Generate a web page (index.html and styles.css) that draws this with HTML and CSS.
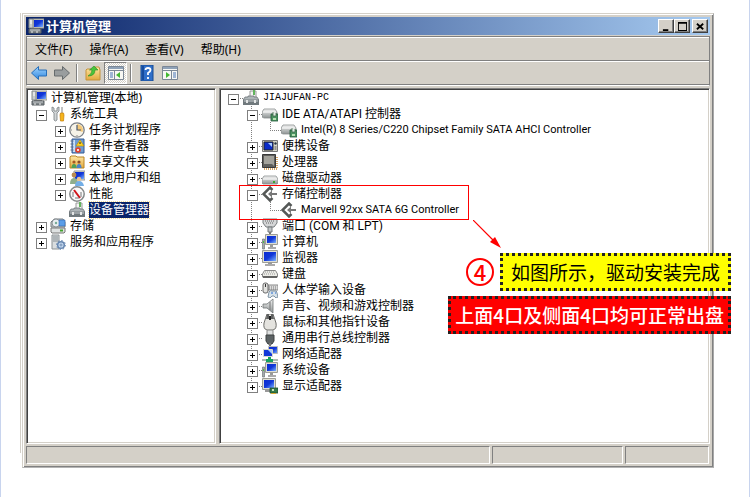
FILE: index.html
```html
<!DOCTYPE html>
<html lang="zh-CN">
<head>
<meta charset="utf-8">
<title>计算机管理</title>
<link rel="stylesheet" href="styles.css">
</head>
<body>
<svg class="sprite" aria-hidden="true">
  <defs>
    <linearGradient id="screen" x1="0" y1="0" x2="1" y2="1"><stop offset="0" stop-color="#0a2bd0"/><stop offset=".5" stop-color="#1238d8"/><stop offset="1" stop-color="#7db4ff"/></linearGradient>
    <linearGradient id="metal" x1="0" y1="0" x2="0" y2="1"><stop offset="0" stop-color="#f4f4f4"/><stop offset="1" stop-color="#8e9494"/></linearGradient>
    <linearGradient id="folder" x1="0" y1="0" x2="0" y2="1"><stop offset="0" stop-color="#ffe9a8"/><stop offset="1" stop-color="#e3a93c"/></linearGradient>
    <linearGradient id="blue" x1="0" y1="0" x2="0" y2="1"><stop offset="0" stop-color="#9fd4ff"/><stop offset="1" stop-color="#2f86de"/></linearGradient>
  </defs>
  <symbol id="i-manage" viewBox="0 0 16 16"><path d="M5 1h11v9H5z" fill="#d9d9cf" stroke="#9a9a92"/><path d="M6 2h9v7H6z" fill="url(#screen)"/><path d="M1 1h4v9H1z" fill="#c7cccc" stroke="#858b8b"/><path d="M2 3h2M2 5h2" stroke="#fff"/><path d="M3 10h8v2H3z" fill="#777"/><path d="M1 11h12v4H1z" fill="#7f8588" stroke="#5a6064"/><path d="M2 12h10" stroke="#c9cdcf"/><path d="M4 13v2M9 13v2" stroke="#eee"/></symbol>
  <symbol id="i-tools" viewBox="0 0 16 16"><path d="M2 1v4l2 2v7q1.500 2 3 0V7l2-2V1L7 2v3H4V2z" fill="#d2d6d8" stroke="#777e82" stroke-width=".8"/><path d="M12 1v7" stroke="#aaa" stroke-width="1.500"/><path d="M10.500 7h3l.5 2-.5 6h-3l-.5-6z" fill="#f6b51c" stroke="#c47c06" stroke-width=".7"/></symbol>
  <symbol id="i-clock" viewBox="0 0 16 16"><circle cx="8" cy="8" r="7.200" fill="#f6f3e8" stroke="#7c8086" stroke-width="1.300"/><path d="M8 8V2a6 6 0 0 1 5.500 8z" fill="#f3c87a"/><path d="M8 3v5h4" fill="none" stroke="#4a5a75" stroke-width="1.200"/><path d="M2 8h1M8 13v1" stroke="#888"/></symbol>
  <symbol id="i-event" viewBox="0 0 16 16"><path d="M3 1h12v14H3z" fill="#6f9cd2" stroke="#355b92"/><path d="M4 2h2v12H4z" fill="#c9def5"/><path d="M1.500 3h3M1.500 6h3M1.500 9h3M1.500 12h3" stroke="#5c6f8a"/><path d="M11 2l4 6H7z" fill="#ffd21e" stroke="#b58800" stroke-width=".6"/><path d="M11 4v2" stroke="#222"/><circle cx="9" cy="12" r="2.800" fill="#e2402a"/><path d="M8 11l2 2M10 11l-2 2" stroke="#fff" stroke-width=".8"/></symbol>
  <symbol id="i-share" viewBox="0 0 16 16"><path d="M1 3l1-1h5l1 1h7v11H1z" fill="url(#folder)" stroke="#b98524"/><circle cx="5" cy="8" r="1.600" fill="#a65a23"/><path d="M2.500 14q0-4 2.500-4t2.500 4z" fill="#4fa057"/><circle cx="10" cy="8" r="1.600" fill="#8b4e27"/><path d="M7.500 14q0-4 2.500-4t2.500 4z" fill="#4a83c9"/></symbol>
  <symbol id="i-users" viewBox="0 0 16 16"><path d="M5 1h11v9H5z" fill="#dedfd6" stroke="#999"/><path d="M6 2h9v7H6z" fill="url(#screen)"/><circle cx="5" cy="5" r="2.400" fill="#b98b50"/><path d="M1 14q0-6 4-6t4 6z" fill="#8fae8c"/><circle cx="10" cy="9" r="2.200" fill="#e6c191"/><path d="M6 16q0-5 4-5t5 5z" fill="#73aee6"/></symbol>
  <symbol id="i-perf" viewBox="0 0 16 16"><circle cx="8" cy="8" r="7.200" fill="#f9f9f9" stroke="#858989" stroke-width="1.500"/><path d="M4 11V6M12 11V6" stroke="#777"/><path d="M5 4l6 8" stroke="#d0161b" stroke-width="2"/><path d="M6 12h4" stroke="#777"/></symbol>
  <symbol id="i-device" viewBox="0 0 16 16"><path d="M7 1h6v8H7z" fill="#f3f3f3" stroke="#999"/><path d="M10 0h2v5h-2z" fill="#62b55d"/><path d="M2 7h3V6h6v1h3l2 3H0z" fill="#aeb5b8" stroke="#666c70" stroke-width=".7"/><path d="M0 10h16v5H0z" fill="#70797d"/><path d="M1 11h14" stroke="#c6cccf"/><path d="M3 10h2v3H3zM11 10h2v3h-2z" fill="#e4e6e6"/></symbol>
  <symbol id="i-storage" viewBox="0 0 16 16"><path d="M1 4l3-3h9l2 3v5H1z" fill="#cbd0d2" stroke="#777d80"/><circle cx="6" cy="5" r="4" fill="#e8edf0" stroke="#8b9296"/><circle cx="6" cy="5" r="1.200" fill="#7a9"/><path d="M9 2h6v6H9z" fill="#5a9de8" stroke="#2f66ab" stroke-width=".6"/><path d="M1 10h14v4l-1 1H2l-1-1z" fill="#dfe2e2" stroke="#777"/><path d="M10 12.500h3" stroke="#43a32e" stroke-width="2"/></symbol>
  <symbol id="i-services" viewBox="0 0 16 16"><path d="M2 1h7v14H2z" fill="#d9dddf" stroke="#8b9194"/><path d="M3 3h5M3 5h5M3 7h5" stroke="#858d92"/><circle cx="11" cy="11" r="3.300" fill="#c7dcf2" stroke="#6686b0" stroke-width="1.500"/><circle cx="11" cy="11" r="4.500" fill="none" stroke="#6686b0" stroke-dasharray="1.500 2"/><circle cx="11" cy="11" r="1" fill="#fff" stroke="#6686b0"/></symbol>
  <symbol id="i-ide" viewBox="0 0 16 16"><path d="M0 6l2-3h11l2 3v5l-2 1H2l-2-1z" fill="url(#metal)" stroke="#898e8e" stroke-width=".8"/><path d="M1 6h13" stroke="#fff"/><path d="M9 8h7v7H9z" fill="#4b9360" stroke="#24583a" stroke-width=".8"/><path d="M11 6v4h3V7" stroke="#45684f" fill="#dfeee2" stroke-width=".8"/><path d="M11 12h3v2h-3z" fill="#b7e0b2"/></symbol>
  <symbol id="i-portable" viewBox="0 0 16 16"><path d="M.5 2.500h15v11H.5z" fill="#d6d6ca" stroke="#777"/><path d="M2 4h9v8H2z" fill="#0b2cc8" stroke="#222"/><path d="M6 5h4v4z" fill="#a9cdff"/><circle cx="13.500" cy="5.500" r="1.200" fill="#234"/><path d="M12.500 9h2M12.500 11h2" stroke="#555"/></symbol>
  <symbol id="i-cpu" viewBox="0 0 16 16"><path d="M2 15h13V3" fill="none" stroke="#c9872f" stroke-width="1.500" stroke-dasharray="1 1"/><path d="M.5.5h13v13H.5z" fill="#5f5f5c" stroke="#393939"/><path d="M2 2h10v10l-2-2H2z" fill="#a3a29b"/></symbol>
  <symbol id="i-disk" viewBox="0 0 16 16"><path d="M0 9l2-3h12l2 3v4l-1 1H1l-1-1z" fill="url(#metal)" stroke="#8a8f8f" stroke-width=".8"/><path d="M1 9h14" stroke="#fff"/><path d="M11 12h2" stroke="#3da52f" stroke-width="2"/></symbol>
  <symbol id="i-ctrl" viewBox="0 0 16 16"><path d="M10.500 4L8 1.500 1.500 8 8 14.500l2.500-2.500" fill="none" stroke="#555857" stroke-width="2.500"/><path d="M6 8l4-3.500V7h5v2h-5v2.500z" fill="#777"/></symbol>
  <symbol id="i-port" viewBox="0 0 16 16"><path d="M1 1h14v4l-3 4H4L1 5z" fill="#d4d6d7" stroke="#777c7e"/><path d="M3 3h10M4 5h8" stroke="#666" stroke-dasharray="1 1"/><path d="M6 9h4v5H6z" fill="#c1c5c7" stroke="#72787a"/><path d="M7 14h2v2H7z" fill="#777"/></symbol>
  <symbol id="i-pc" viewBox="0 0 16 16"><path d="M3.500.5h12v10h-12z" fill="#deded4" stroke="#9e9e96"/><path d="M5 2h9v7H5z" fill="url(#screen)"/><path d="M8 11h3v2H8z" fill="#999"/><path d="M6 14h8" stroke="#aaa" stroke-width="2"/><path d="M.5 5h2v10h-2z" fill="#a4aaac" stroke="#72787a" stroke-width=".7"/><path d="M1 7h1v2H1z" fill="#50bc45"/></symbol>
  <symbol id="i-monitor" viewBox="0 0 16 16"><path d="M.5.500h15v12H.5z" fill="#deded4" stroke="#9e9e96"/><path d="M2 2h12v9H2z" fill="url(#screen)"/><path d="M6 12h4v2H6z" fill="#999"/><path d="M3 15h10" stroke="#aaa" stroke-width="2"/></symbol>
  <symbol id="i-keyboard" viewBox="0 0 16 16"><path d="M2.500 4.500h11L15.500 8v3H.5V8z" fill="#ecece7" stroke="#888"/><path d="M3 6h10M2 8h12" stroke="#999" stroke-dasharray="1 1"/><path d="M1 11h14" stroke="#444" stroke-width="1.500"/></symbol>
  <symbol id="i-hid" viewBox="0 0 16 16"><path d="M6 3h10v5H6z" fill="#ddd" stroke="#888"/><path d="M7 5h8M7 7h8" stroke="#777" stroke-dasharray="1 1"/><rect x="1" y="1" width="5" height="10" rx="2" fill="#e2e2df" stroke="#686868"/><path d="M3.500 2v3" stroke="#333"/><path d="M7 10q1-2 3-1h2q3-1 3 2l1 4-2 1-2-2h-2l-2 2-2-1z" fill="#d7e2ea" stroke="#667d91" stroke-width=".8"/><path d="M9 11h2M13 11h1" stroke="#256bd2"/></symbol>
  <symbol id="i-sound" viewBox="0 0 16 16"><path d="M1 6h4l6-5v14l-6-5H1z" fill="url(#metal)" stroke="#6e7475" stroke-width=".8"/><path d="M8 4v8" stroke="#777"/></symbol>
  <symbol id="i-mouse" viewBox="0 0 16 16"><path d="M5 0h6l3 9q1 6-3 7H5q-4-1-3-7z" fill="#e4e3df" stroke="#6c6c69"/><path d="M5 0h2v5H4zM9 0h2l1 5H9z" fill="#5e6060"/><path d="M7 2h2v4H7z" fill="#222"/></symbol>
  <symbol id="i-usb" viewBox="0 0 16 16"><path d="M5 0h6v6H5z" fill="#e0e2e2" stroke="#888"/><path d="M4 5h8v6l-2 3H6l-2-3z" fill="#5c6264" stroke="#3c4041"/><path d="M7 13h2v3H7z" fill="#777"/></symbol>
  <symbol id="i-net" viewBox="0 0 16 16"><path d="M6.500.5h9v7h-9z" fill="url(#screen)" stroke="#b9bcbc"/><path d="M1.500 3.500h9v7h-9z" fill="#1238d8" stroke="#d8d8ce"/><path d="M6 4h4v4z" fill="#a9cdff"/><path d="M0 14h16" stroke="#aebbb2" stroke-width="2"/><path d="M6 11h3v2h2v3H4v-3h2z" fill="#18a45d"/></symbol>
  <symbol id="i-display" viewBox="0 0 16 16"><path d="M.5.500h13v11H.5z" fill="#deded4" stroke="#9e9e96"/><path d="M2 2h10v8H2z" fill="url(#screen)"/><path d="M3 13h7" stroke="#999" stroke-width="2"/><path d="M8 10h8v5H8z" fill="#347b49" stroke="#1c4a2b" stroke-width=".8"/><path d="M10 11h2v2h-2z" fill="#cbe6bd"/><path d="M9 15.500h5" stroke="#d6a832"/></symbol>
  <symbol id="i-back" viewBox="0 0 16 16"><path d="M7.500 1.500L.5 8l7 6.500V11h8V5h-8z" fill="url(#blue)" stroke="#286fb8"/></symbol>
  <symbol id="i-forward" viewBox="0 0 16 16"><path d="M8.500 1.500l7 6.500-7 6.500V11h-8V5h8z" fill="#999d9e" stroke="#666b6d"/></symbol>
  <symbol id="i-up" viewBox="0 0 16 16"><path d="M1 5l1-1h7l1-2h4l1 3v10H1z" fill="url(#folder)" stroke="#c6933c"/><path d="M3 11q4-2 4-6H4.500L9 1l4 4h-3q0 6-7 6z" fill="#49c43b" stroke="#258d22" stroke-width=".6"/></symbol>
  <symbol id="i-tree" viewBox="0 0 16 16"><path d="M.5 1.500h15v13H.5z" fill="#f7f7f4" stroke="#7b8796"/><path d="M1 3h14" stroke="#8fa2b8" stroke-width="2"/><path d="M1 5.500h14M6.500 6v8" stroke="#7b8796"/><path d="M2 8h3M2 10h3M2 12h3" stroke="#4673b5"/><path d="M12 7v6l-4-3z" fill="#43b832"/></symbol>
  <symbol id="i-help" viewBox="0 0 16 16"><path d="M2 0h12v16H2z" fill="#2f6fc9" stroke="#174a91"/><path d="M3 1h2v14H3z" fill="#174c9d"/><path d="M6.500 5q0-2 2.500-2t2.500 2q0 1.500-2.500 3v2M9 12v2" fill="none" stroke="#fff" stroke-width="1.800"/></symbol>
  <symbol id="i-action" viewBox="0 0 16 16"><path d="M.5 1.500h15v13H.5z" fill="#f7f7f4" stroke="#7b8796"/><path d="M1 3h14" stroke="#8fa2b8" stroke-width="2"/><path d="M1 5.500h14M9.500 6v8" stroke="#7b8796"/><path d="M11 8h3M11 10h3M11 12h3" stroke="#4673b5"/><path d="M4 7v6l4-3z" fill="#43b832"/></symbol>
</svg>

<main class="frame">
  <section class="window">
    <header class="titlebar">
      <svg class="icon"><use href="#i-manage"/></svg>
      <h1>计算机管理</h1>
      <button class="winbtn" aria-label="最小化"><svg viewBox="0 0 10 10"><path d="M1 8h6v2H1z"/></svg></button>
      <button class="winbtn" aria-label="最大化"><svg viewBox="0 0 10 10"><path d="M0 0h10v10H0zM1 2v7h8V2z" fill-rule="evenodd"/></svg></button>
      <button class="winbtn close" aria-label="关闭"><svg viewBox="0 0 10 10"><path d="M1 2l7 6M8 2L1 8" stroke="#000" stroke-width="2"/></svg></button>
    </header>
    <div class="bars">
      <nav class="menu">
        <button>文件(F)</button><button>操作(A)</button><button>查看(V)</button><button>帮助(H)</button>
      </nav>
      <div class="toolbar">
        <button aria-label="后退"><svg class="icon"><use href="#i-back"/></svg></button>
        <button aria-label="前进"><svg class="icon"><use href="#i-forward"/></svg></button>
        <span class="sep"></span>
        <button aria-label="向上"><svg class="icon"><use href="#i-up"/></svg></button>
        <button class="pressed" aria-label="控制台树"><svg class="icon"><use href="#i-tree"/></svg></button>
        <span class="sep"></span>
        <button aria-label="帮助"><svg class="icon"><use href="#i-help"/></svg></button>
        <button aria-label="操作窗格"><svg class="icon"><use href="#i-action"/></svg></button>
      </div>
    </div>
    <div class="panes">
      <div class="pane">
        <ul class="tree">
          <li><div class="row"><svg class="icon"><use href="#i-manage"/></svg><span>计算机管理(本地)</span></div>
            <ul class="flush">
              <li><div class="row"><i class="box open"></i><svg class="icon"><use href="#i-tools"/></svg><span>系统工具</span></div>
                <ul>
                  <li><div class="row"><i class="box"></i><svg class="icon"><use href="#i-clock"/></svg><span>任务计划程序</span></div></li>
                  <li><div class="row"><i class="box"></i><svg class="icon"><use href="#i-event"/></svg><span>事件查看器</span></div></li>
                  <li><div class="row"><i class="box"></i><svg class="icon"><use href="#i-share"/></svg><span>共享文件夹</span></div></li>
                  <li><div class="row"><i class="box"></i><svg class="icon"><use href="#i-users"/></svg><span>本地用户和组</span></div></li>
                  <li><div class="row"><i class="box"></i><svg class="icon"><use href="#i-perf"/></svg><span>性能</span></div></li>
                  <li><div class="row"><i class="box none"></i><svg class="icon"><use href="#i-device"/></svg><span class="selected">设备管理器</span></div></li>
                </ul></li>
              <li><div class="row"><i class="box"></i><svg class="icon"><use href="#i-storage"/></svg><span>存储</span></div></li>
              <li><div class="row"><i class="box"></i><svg class="icon"><use href="#i-services"/></svg><span>服务和应用程序</span></div></li>
            </ul></li>
        </ul>
      </div>
      <div class="pane">
        <ul class="tree lined">
          <li><div class="row"><i class="box open"></i><svg class="icon"><use href="#i-device"/></svg><span class="host">JIAJUFAN-PC</span></div>
            <ul>
              <li><div class="row"><i class="box open"></i><svg class="icon"><use href="#i-ide"/></svg><span>IDE ATA/ATAPI 控制器</span></div>
                <ul><li><div class="row"><i class="box none"></i><svg class="icon"><use href="#i-ide"/></svg><span class="device">Intel(R) 8 Series/C220 Chipset Family SATA AHCI Controller</span></div></li></ul></li>
              <li><div class="row"><i class="box"></i><svg class="icon"><use href="#i-portable"/></svg><span>便携设备</span></div></li>
              <li><div class="row"><i class="box"></i><svg class="icon"><use href="#i-cpu"/></svg><span>处理器</span></div></li>
              <li><div class="row"><i class="box"></i><svg class="icon"><use href="#i-disk"/></svg><span>磁盘驱动器</span></div></li>
              <li class="marked"><div class="row"><i class="box open"></i><svg class="icon"><use href="#i-ctrl"/></svg><span>存储控制器</span></div>
                <ul><li><div class="row"><i class="box none"></i><svg class="icon"><use href="#i-ctrl"/></svg><span class="device">Marvell 92xx SATA 6G Controller</span></div></li></ul></li>
              <li><div class="row"><i class="box"></i><svg class="icon"><use href="#i-port"/></svg><span>端口 (COM 和 LPT)</span></div></li>
              <li><div class="row"><i class="box"></i><svg class="icon"><use href="#i-pc"/></svg><span>计算机</span></div></li>
              <li><div class="row"><i class="box"></i><svg class="icon"><use href="#i-monitor"/></svg><span>监视器</span></div></li>
              <li><div class="row"><i class="box"></i><svg class="icon"><use href="#i-keyboard"/></svg><span>键盘</span></div></li>
              <li><div class="row"><i class="box"></i><svg class="icon"><use href="#i-hid"/></svg><span>人体学输入设备</span></div></li>
              <li><div class="row"><i class="box"></i><svg class="icon"><use href="#i-sound"/></svg><span>声音、视频和游戏控制器</span></div></li>
              <li><div class="row"><i class="box"></i><svg class="icon"><use href="#i-mouse"/></svg><span>鼠标和其他指针设备</span></div></li>
              <li><div class="row"><i class="box"></i><svg class="icon"><use href="#i-usb"/></svg><span>通用串行总线控制器</span></div></li>
              <li><div class="row"><i class="box"></i><svg class="icon"><use href="#i-net"/></svg><span>网络适配器</span></div></li>
              <li><div class="row"><i class="box"></i><svg class="icon"><use href="#i-pc"/></svg><span>系统设备</span></div></li>
              <li><div class="row"><i class="box"></i><svg class="icon"><use href="#i-display"/></svg><span>显示适配器</span></div></li>
            </ul></li>
        </ul>
      </div>
    </div>
    <footer class="status"><span></span><span></span><span></span></footer>
  </section>
  <aside class="notes">
    <svg class="arrow" viewBox="0 0 28 28"><path d="M0 0l20 20" stroke="#f00" stroke-width="1.200"/><path d="M28 28l-11-6 5-5z" fill="#f00"/></svg>
    <div class="step"><b>4</b><p class="note">如图所示，驱动安装完成</p></div>
    <p class="note alert">上面4口及侧面4口均可正常出盘</p>
  </aside>
</main>
</body>
</html>
```
FILE: styles.css
```css
* { box-sizing: border-box; }

body {
  margin: 0;
  min-height: 100vh;
  display: flex;
  background: #fff;
  border: solid #c8d4ee;
  border-width: 0 1px;
  color: #000;
  font: 12px/16px "Noto Sans", "Noto Sans CJK SC", sans-serif;
}

button {
  padding: 0;
  border: 0;
  background: none;
  font: inherit;
  color: inherit;
}

ul, p, h1 { margin: 0; padding: 0; list-style: none; }

.sprite { position: absolute; width: 0; height: 0; }

.icon { width: 16px; height: 16px; flex: none; display: block; }

.frame {
  position: relative;
  flex: 1;
  display: flex;
  margin: 13px 35px 29px 19px;
  padding-left: 2px;
  background: linear-gradient(#d4d0c8, #d4d0c8) 0 0 / 1px calc(100% - 15px) no-repeat;
}

.window {
  flex: 1;
  min-width: 0;
  display: flex;
  flex-direction: column;
  padding: 2px;
  background: #d4d0c8;
  border: 1px solid #d4d0c8;
  border-right-color: #a8a8a8;
  border-bottom-color: #b4b4b4;
  box-shadow: inset 1px 1px #fff, inset -1px -1px #808080;
}

.titlebar {
  display: flex;
  align-items: center;
  height: 18px;
  margin: 1px 1px 0;
  padding: 0 2px;
  background: linear-gradient(90deg, #0a246a, #a6caf0);
}

.titlebar h1 {
  flex: 1;
  margin-left: 2px;
  color: #fff;
  font-size: 13px;
  font-weight: 700;
  line-height: 18px;
}

.winbtn {
  width: 16px;
  height: 14px;
  display: grid;
  place-items: center;
  background: #d4d0c8;
  border: 1px solid;
  border-color: #fff #404040 #404040 #fff;
  box-shadow: inset -1px -1px #808080;
}

.winbtn svg { width: 9px; height: 9px; }
.close { margin-left: 2px; }

.bars {
  margin: 1px 1px 0;
  border: 1px solid #808080;
  border-bottom-color: #fff;
}

.menu {
  display: flex;
  gap: 17px;
  height: 24px;
  padding: 1px 8px 0;
  border-top: 1px solid #fff;
  border-bottom: 1px solid #808080;
}

.toolbar {
  display: flex;
  align-items: center;
  height: 24px;
  border-top: 1px solid #fff;
  border-bottom: 1px solid #808080;
}

.toolbar button {
  width: 23px;
  height: 22px;
  display: grid;
  place-items: center;
  border: 1px solid transparent;
}

.toolbar .pressed {
  background: repeating-conic-gradient(#fff 0 25%, #d4d0c8 0 50%) 0 0 / 2px 2px;
  border-color: #808080 #fff #fff #808080;
}

.sep {
  width: 2px;
  height: 18px;
  margin: 0 3px;
  border-left: 1px solid #808080;
  border-right: 1px solid #fff;
}

.panes {
  flex: 1;
  display: grid;
  grid-template-columns: 190fr 491fr;
  gap: 3px;
  margin: 2px 1px;
}

.pane {
  padding: 1px 2px;
  background: #fff;
  border: 1px solid;
  border-color: #808080 #fff #fff #808080;
  box-shadow: inset 1px 1px #404040, inset -1px -1px #d4d0c8;
}

.tree { padding-left: 2px; white-space: nowrap; }
.tree ul { padding-left: 19px; }
.tree .flush { padding-left: 0; }
.lined { font-family: Roboto, "Noto Sans CJK SC", sans-serif; }

.row { display: flex; height: 16px; }
.row span { margin-left: 4px; }

.row .selected {
  background: #0a246a;
  color: #fff;
  outline: 1px dotted #f5db95;
}

.row .host { font-family: "Liberation Mono", monospace; font-size: 10px; }
.row .device { font-size: 11px; }

.box { position: relative; width: 19px; flex: none; }

.box::before {
  content: "";
  position: absolute;
  left: 5px;
  top: 4px;
  width: 9px;
  height: 9px;
  border: 1px solid #808080;
  background:
    linear-gradient(#000, #000) center / 5px 1px no-repeat,
    linear-gradient(#000, #000) center / 1px 5px no-repeat,
    #fff;
}

.lined .box::before { left: 4px; }

.box.open::before { background: linear-gradient(#000, #000) center / 5px 1px no-repeat, #fff; }
.box.none::before { content: none; }

.lined .box {
  background: repeating-linear-gradient(90deg, #808080 0 1px, #fff 1px 2px) 8px 8px / 11px 1px no-repeat;
}

.lined ul > li {
  background: repeating-linear-gradient(#808080 0 1px, #fff 1px 2px) 8px 0 / 1px 100% no-repeat;
}

.lined ul > li:last-child { background-size: 1px 8px; }

.marked { position: relative; }

.marked::after {
  content: "";
  position: absolute;
  left: -4px;
  top: -1px;
  width: 228px;
  height: 33px;
  border: 1px solid #f00;
}

.status {
  display: grid;
  grid-template-columns: 465fr 132fr 84fr;
  gap: 2px;
  height: 18px;
  margin: 0 2px 1px 1px;
}

.status span {
  border: 1px solid;
  border-color: #808080 #fff #fff #808080;
}

.notes {
  position: absolute;
  right: -17px;
  top: 207px;
  display: flex;
  flex-direction: column;
  align-items: flex-end;
  gap: 5px;
}

.arrow { width: 28px; height: 28px; margin-right: 230px; }

.step { display: flex; align-items: center; gap: 6px; }

.step b {
  width: 28px;
  height: 28px;
  border: 2px solid #f00;
  border-radius: 50%;
  color: #f00;
  font: 500 22px/23px "Noto Sans CJK SC", sans-serif;
  text-align: center;
}

.note {
  padding: 3px 8px;
  border: 3px dotted #222;
  background: #ff0;
  font: 19px/26px "Noto Sans CJK SC", sans-serif;
  white-space: nowrap;
}

.alert { padding: 3px 4px; background: #f00; color: #fff; font-weight: 500; }
```
